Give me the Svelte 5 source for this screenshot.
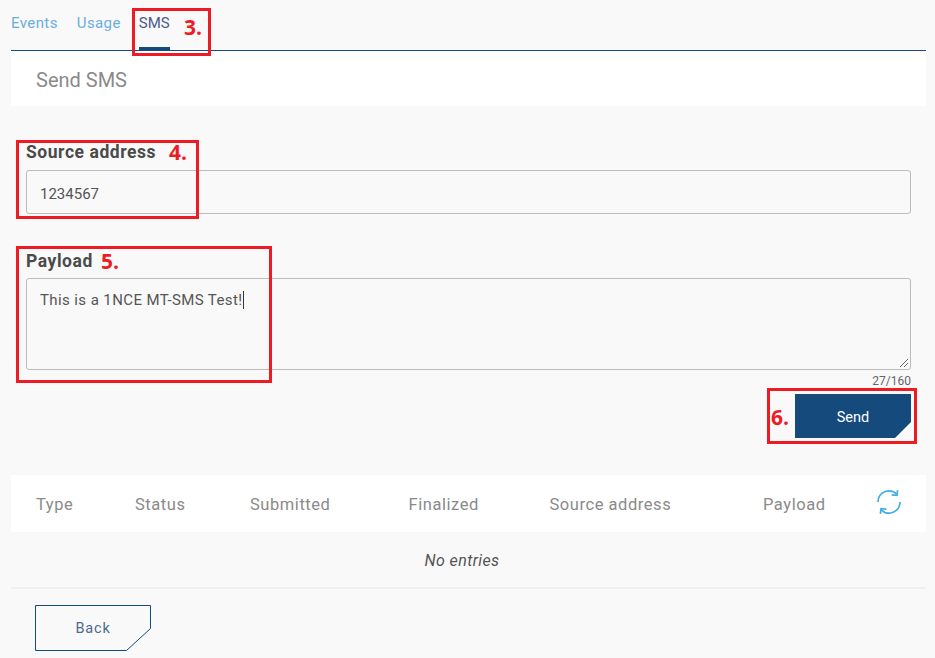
<script>
  const columns = [
    { label: 'Type', width: 99 },
    { label: 'Status', width: 115 },
    { label: 'Submitted', width: 158.5 },
    { label: 'Finalized', width: 141 },
    { label: 'Source address', width: 214.5 },
    { label: 'Payload', width: 112 }
  ];
</script>

<div class="page">
  <nav class="tabs">
    <span class="tab">Events</span>
    <span class="tab">Usage</span>
    <span class="tab active">SMS</span>
  </nav>

  <div class="title">Send SMS</div>

  <form class="form">
    <label class="field first">
      <span class="label">Source address</span>
      <div class="control input">1234567</div>
    </label>
    <label class="field second">
      <span class="label">Payload</span>
      <div class="control textarea">
        <span>This is a 1NCE MT-SMS Test!</span><i class="caret"></i>
        <svg class="grip" width="10" height="10" viewBox="0 0 10 10">
          <path d="M1 9 9 1M5 9 9 5" stroke="#666" stroke-width="1" fill="none" />
        </svg>
      </div>
    </label>
    <div class="count">27/160</div>
    <div class="actions">
      <button type="button" class="send">Send</button>
    </div>
  </form>

  <div class="thead">
    {#each columns as c}
      <span class="th" style="width:{c.width}px">{c.label}</span>
    {/each}
    <svg class="refresh" width="26" height="26" viewBox="0 0 26 26" fill="none" stroke="#3fb0e6" stroke-width="1.7">
      <path d="M2 13A11 11 0 0 1 20.8 5.2" />
      <path d="M24 13A11 11 0 0 1 5.2 20.8" />
      <path d="M21.6 1.2 21 6.4 15.6 5.8" />
      <path d="M4.4 24.8 5 19.6 10.4 20.2" />
    </svg>
  </div>
  <div class="empty">No entries</div>

  <div class="footer">
    <button type="button" class="back">
      <svg class="back-shape" width="116" height="46" viewBox="0 0 116 46">
        <path d="M.5.5H115.5V23.5L91.5 45.5H.5Z" fill="none" stroke="#154a7d" />
      </svg>
      <span>Back</span>
    </button>
  </div>

  <div class="mark" style="left:132px;top:8px;width:79px;height:48px"></div>
  <div class="mark" style="left:16px;top:140px;width:183px;height:79px"></div>
  <div class="mark" style="left:16px;top:246px;width:256px;height:137px"></div>
  <div class="mark" style="left:767px;top:388px;width:150px;height:56px"></div>
  <span class="num" style="left:184px;top:15px">3.</span>
  <span class="num" style="left:169px;top:140px">4.</span>
  <span class="num" style="left:101px;top:249px">5.</span>
  <span class="num" style="left:771px;top:405px">6.</span>
</div>

<style>
  :global(body) {
    margin: 0;
    background: #f9f9f9;
  }
  .page {
    position: relative;
    width: 935px;
    height: 658px;
    padding: 0 9px 0 11px;
    box-sizing: border-box;
    overflow: hidden;
    font-family: Roboto, "Liberation Sans", sans-serif;
    color: #4a4a4a;
  }
  .tabs {
    display: flex;
    gap: 19px;
    height: 50px;
    border-bottom: 1px solid #154a7d;
  }
  .tab {
    font-size: 15px;
    letter-spacing: .4px;
    line-height: 46px;
    color: #6aaee0;
    height: 50px;
    box-sizing: border-box;
  }
  .active {
    color: #4d5a8c;
    letter-spacing: 0;
    margin-left: -1px;
    border-bottom: 3px solid #154a7d;
  }
  .title {
    background: #fff;
    height: 55px;
    line-height: 59px;
    padding-left: 25px;
    font-size: 20px;
    color: #8a8a8a;
  }
  .form {
    padding: 0 15px;
    display: flex;
    flex-direction: column;
  }
  .field {
    display: flex;
    flex-direction: column;
  }
  .first {
    margin-top: 36px;
  }
  .second {
    margin-top: 37px;
  }
  .label {
    font-size: 17.5px;
    font-weight: 700;
    letter-spacing: .55px;
    line-height: 20px;
    height: 28px;
    color: #4a4a4a;
  }
  .second .label {
    height: 27px;
  }
  .control {
    border: 1px solid #bdbdbd;
    border-radius: 3px;
    padding: 0 13px;
    font-size: 15px;
    color: #555;
    box-sizing: border-box;
  }
  .input {
    height: 44px;
    line-height: 44px;
    padding-top: 1px;
  }
  .textarea {
    position: relative;
    height: 92px;
    line-height: 40px;
    padding-top: 1px;
    letter-spacing: .4px;
  }
  .caret {
    display: inline-block;
    width: 1px;
    height: 18px;
    background: #333;
    vertical-align: -4px;
  }
  .grip {
    position: absolute;
    right: 1px;
    bottom: 1px;
  }
  .count {
    text-align: right;
    font-size: 12px;
    line-height: 21px;
    padding-top: 1px;
    height: 21px;
    box-sizing: border-box;
    color: #666;
  }
  .actions {
    display: flex;
    justify-content: flex-end;
    margin-top: 3px;
  }
  .send {
    width: 116px;
    height: 44px;
    border: 0;
    background: #154a7d;
    color: #fff;
    font: 14.5px Roboto, sans-serif;
    clip-path: polygon(0 0, 100% 0, 100% calc(100% - 16px), calc(100% - 16px) 100%, 0 100%);
    padding: 2px 0 0;
  }
  .thead {
    display: flex;
    align-items: center;
    height: 57px;
    margin-top: 37px;
    padding: 2px 0 0 25px;
    box-sizing: border-box;
    background: #fff;
    position: relative;
  }
  .th {
    font-size: 16.5px;
    letter-spacing: .55px;
    color: #8a8a8a;
    flex: none;
  }
  .th:nth-child(6) {
    margin-left: -1px;
  }
  .refresh {
    position: absolute;
    left: 865px;
    top: 14px;
  }
  .empty {
    height: 55px;
    line-height: 57px;
    text-align: center;
    font-size: 16px;
    letter-spacing: .4px;
    font-style: italic;
    color: #555;
    border-bottom: 2px solid #f0f0f0;
    padding-right: 13px;
  }
  .footer {
    padding: 16px 0 0 24px;
  }
  .back {
    position: relative;
    display: block;
    width: 116px;
    height: 46px;
    padding: 0;
    border: 0;
    background: none;
    font: 14.5px Roboto, sans-serif;
    letter-spacing: .8px;
    color: #4d6a90;
  }
  .back-shape {
    position: absolute;
    inset: 0;
  }
  .mark {
    position: absolute;
    border: 3px solid #ed1c24;
    box-sizing: border-box;
  }
  .num {
    position: absolute;
    font: 700 21px/24px "Open Sans", sans-serif;
    color: #ed1c24;
  }
</style>
